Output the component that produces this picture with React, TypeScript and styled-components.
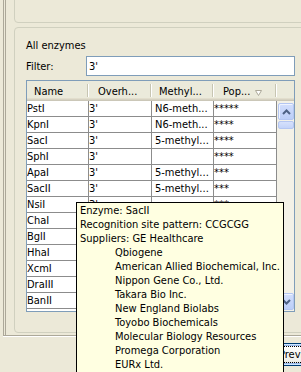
import React from "react";
import styled, { createGlobalStyle } from "styled-components";

const Global = createGlobalStyle`
  html, body { margin: 0; padding: 0; background: #ECE9D8; }
  body {
    font-family: "DejaVu Sans Condensed", "DejaVu Sans", "Liberation Sans", sans-serif;
    font-stretch: condensed;
    font-size: 11px;
    color: #000;
  }
`;

const Screen = styled.div`
  position: relative;
  width: 301px;
  height: 372px;
  overflow: hidden;
  background: #ECE9D8;
  display: flex;
  flex-direction: column;
`;

const Panel = styled.div`
  flex: none;
  margin-left: 3px;
  height: 336px;
  box-sizing: border-box;
  border-left: 1px solid #ACA899;
  border-bottom: 1px solid #ACA899;
  box-shadow: 0 1px 0 #ffffff;
`;

const PanelInner = styled.div`
  margin-left: 1px;
  height: 100%;
  box-sizing: border-box;
  border-left: 1px solid #ACA899;
  padding-left: 8px;
  display: flex;
  flex-direction: column;
`;

const GroupBox = styled.div<{ $top: number; $height: number }>`
  flex: none;
  margin-top: ${(p) => p.$top}px;
  margin-right: -30px;
  height: ${(p) => p.$height}px;
  box-sizing: border-box;
  border: 1px solid #D0D0BF;
  border-radius: 4px;
`;

const GroupContent = styled.div`
  padding: 11px 0 0 11px;
  width: 269px;
  display: flex;
  flex-direction: column;
  gap: 4px;
`;

const Title = styled.div`
  line-height: 13px;
  white-space: nowrap;
`;

const FilterRow = styled.div`
  display: grid;
  grid-template-columns: 60px 209px;
  align-items: center;
  height: 20px;
`;

const FilterLabel = styled.div`
  line-height: 13px;
`;

const FilterInput = styled.input`
  box-sizing: border-box;
  width: 209px;
  height: 20px;
  margin: 0;
  border: 1px solid #7F9DB9;
  padding: 0 2px;
  background: #fff;
  font: inherit;
  font-stretch: condensed;
  color: #000;
  outline: none;
`;

const TableFrame = styled.div`
  box-sizing: border-box;
  width: 269px;
  height: 232px;
  border: 1px solid #7F9DB9;
  display: grid;
  grid-template-columns: 250px 17px;
  grid-template-rows: 20px 210px;
  background: #fff;
`;

const HeaderRow = styled.div`
  grid-column: 1 / span 2;
  display: grid;
  grid-template-columns: 62px 63px 62px 63px 17px;
  height: 20px;
  background: #EBEADB;
  box-shadow: inset 0 -1px 0 #CBC7B8, inset 0 -2px 0 #D6D2C2, inset 0 -3px 0 #E2DECD;
`;

const HeaderCell = styled.div<{ $pad: number; $sep?: boolean }>`
  position: relative;
  display: flex;
  align-items: flex-start;
  padding: 4px 0 0 ${(p) => p.$pad}px;
  line-height: 13px;
  white-space: nowrap;
  overflow: hidden;
  &::after {
    content: "";
    display: ${(p) => (p.$sep === false ? "none" : "block")};
    position: absolute;
    right: 1px;
    top: 3px;
    bottom: 4px;
    width: 1px;
    background: #C7C5B2;
    box-shadow: 1px 0 0 #ffffff;
  }
`;

const SortIcon = styled.svg`
  margin: 5px 0 0 5px;
  flex: none;
`;

const Body = styled.div`
  display: flex;
  flex-direction: column;
  overflow: hidden;
  background: #fff;
`;

const Row = styled.div`
  flex: none;
  display: grid;
  grid-template-columns: 62px 63px 62px 63px;
  height: 16px;
  box-sizing: border-box;
  border-bottom: 1px solid #8C8C8C;
`;

const Cell = styled.div<{ $pad: number }>`
  border-right: 1px solid #8C8C8C;
  padding: 1px 0 0 ${(p) => p.$pad}px;
  line-height: 13px;
  white-space: nowrap;
  overflow: hidden;
`;

const ScrollBar = styled.div`
  display: flex;
  flex-direction: column;
  padding: 2px 0 1px 1px;
  background: #F3F1E7;
`;

const ScrollButton = styled.div`
  flex: none;
  height: 17px;
  box-sizing: border-box;
  border: 1px solid #B4C6F2;
  border-radius: 2px;
  background: linear-gradient(to bottom, #D2DEFC, #BCCEF8);
  box-shadow: inset 1px 1px 0 #EEF3FF;
  display: flex;
  align-items: center;
  justify-content: center;
`;

const Thumb = styled.div`
  flex: none;
  margin-top: 1px;
  height: 8px;
  box-sizing: border-box;
  border: 1px solid #B4C6F2;
  border-radius: 2px;
  background: linear-gradient(to bottom, #D6E1FC, #C3D3F9);
`;

const Track = styled.div`
  flex: 1;
`;

const Tooltip = styled.div`
  position: absolute;
  left: 76px;
  top: 202px;
  width: 208px;
  height: 200px;
  box-sizing: border-box;
  border: 1px solid #000;
  background: #FFFFE1;
  padding: 1px 2px 0 3px;
  line-height: 14px;
  white-space: nowrap;
`;

const TipLine = styled.div``;

const SupplierList = styled.div`
  padding-left: 35px;
`;

const BottomBar = styled.div`
  flex: 1;
  display: flex;
  justify-content: flex-end;
  padding-top: 7px;
`;

const PreviewButton = styled.button`
  flex: none;
  width: 75px;
  height: 23px;
  margin: 0 -45px 0 0;
  box-sizing: border-box;
  border: 1px solid #003C74;
  border-radius: 3px;
  background: linear-gradient(to bottom, #FFFFFF, #F0F0EA 80%, #D6D0C5);
  box-shadow: inset 0 0 0 1px #CEE7FF, inset 0 0 0 2px #98B8EA;
  outline: 1px dotted #000;
  outline-offset: -4px;
  padding: 0 0 0 7px;
  text-align: left;
  font: inherit;
  font-stretch: condensed;
  line-height: 13px;
  color: #000;
`;

const Chevron = ({ up }: { up: boolean }) => (
  <svg width="9" height="6" viewBox="0 0 9 6">
    <polyline
      points={up ? "1,5 4.5,1.5 8,5" : "1,1 4.5,4.5 8,1"}
      fill="none"
      stroke="#4D6185"
      strokeWidth="2"
    />
  </svg>
);

const rows: [string, string, string, string][] = [
  ["PstI", "3'", "N6-meth...", "*****"],
  ["KpnI", "3'", "N6-meth...", "****"],
  ["SacI", "3'", "5-methyl...", "****"],
  ["SphI", "3'", "", "****"],
  ["ApaI", "3'", "5-methyl...", "***"],
  ["SacII", "3'", "5-methyl...", "***"],
  ["NsiI", "3'", "", "***"],
  ["ChaI", "3'", "", "***"],
  ["BglI", "3'", "5-methyl...", "***"],
  ["HhaI", "3'", "5-methyl...", "***"],
  ["XcmI", "3'", "", "**"],
  ["DraIII", "3'", "5-methyl...", "**"],
  ["BanII", "3'", "5-methyl...", "**"],
  ["", "", "", ""],
];

const cellPad = [0, 0, 3, 0];

const suppliers = [
  "Qbiogene",
  "American Allied Biochemical, Inc.",
  "Nippon Gene Co., Ltd.",
  "Takara Bio Inc.",
  "New England Biolabs",
  "Toyobo Biochemicals",
  "Molecular Biology Resources",
  "Promega Corporation",
  "EURx Ltd.",
];

export default function App() {
  return (
    <>
      <Global />
      <Screen>
        <Panel>
          <PanelInner>
            <GroupBox $top={-10} $height={33} />
            <GroupBox $top={4} $height={306}>
              <GroupContent>
                <Title>All enzymes</Title>
                <FilterRow>
                  <FilterLabel>Filter:</FilterLabel>
                  <FilterInput defaultValue="3'" readOnly />
                </FilterRow>
                <TableFrame>
                  <HeaderRow>
                    <HeaderCell $pad={7}>Name</HeaderCell>
                    <HeaderCell $pad={9}>Overh...</HeaderCell>
                    <HeaderCell $pad={7}>Methyl...</HeaderCell>
                    <HeaderCell $pad={9}>
                      Pop...
                      <SortIcon width="7" height="6" viewBox="0 0 7 6">
                        <polygon points="0.5,0.5 6.5,0.5 3.5,5.5" fill="#fff" stroke="#ACA899" strokeWidth="1" />
                      </SortIcon>
                    </HeaderCell>
                    <HeaderCell $pad={0} $sep={false} />
                  </HeaderRow>
                  <Body>
                    {rows.map((r, ri) => (
                      <Row key={ri}>
                        {r.map((v, i) => (
                          <Cell key={i} $pad={cellPad[i]}>
                            {v}
                          </Cell>
                        ))}
                      </Row>
                    ))}
                  </Body>
                  <ScrollBar>
                    <ScrollButton>
                      <Chevron up />
                    </ScrollButton>
                    <Thumb />
                    <Track />
                    <ScrollButton>
                      <Chevron up={false} />
                    </ScrollButton>
                  </ScrollBar>
                </TableFrame>
              </GroupContent>
            </GroupBox>
          </PanelInner>
        </Panel>
        <BottomBar>
          <PreviewButton>Preview</PreviewButton>
        </BottomBar>
        <Tooltip>
          <TipLine>Enzyme: SacII</TipLine>
          <TipLine>Recognition site pattern: CCGCGG</TipLine>
          <TipLine>Suppliers: GE Healthcare</TipLine>
          <SupplierList>
            {suppliers.map((s) => (
              <TipLine key={s}>{s}</TipLine>
            ))}
          </SupplierList>
        </Tooltip>
      </Screen>
    </>
  );
}
